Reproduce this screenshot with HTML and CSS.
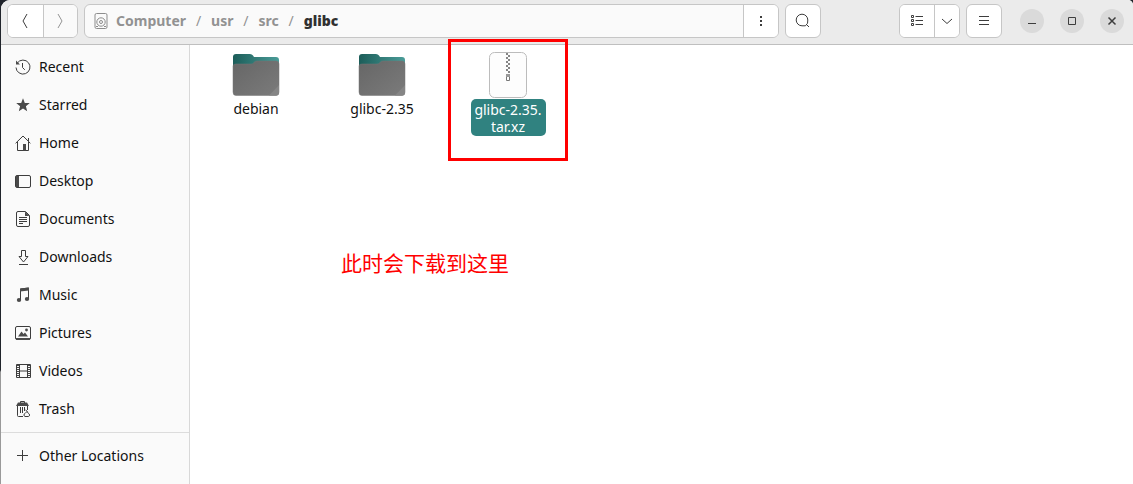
FILE: index.html
```html
<!DOCTYPE html>
<html lang="en">
<head>
<meta charset="utf-8">
<title>glibc</title>
<link rel="stylesheet" href="styles.css">
</head>
<body>
<div class="window">
  <header class="toolbar">
    <div class="group nav">
      <button class="cell" aria-label="Back"><svg width="16" height="16" viewBox="0 0 16 16"><path class="ln" d="M10 1 6 8l4 7"/></svg></button>
      <button class="cell off" aria-label="Forward"><svg width="16" height="16" viewBox="0 0 16 16"><path class="ln faint" d="M6 1l4 7-4 7"/></svg></button>
    </div>
    <div class="group path">
      <div class="crumbs">
        <svg width="14" height="16" viewBox="0 0 14 16"><g fill="none" stroke="#8d8d8d"><rect x="1" y=".5" width="12" height="15" rx="1.5"/><circle cx="7" cy="9" r="4.2"/><circle cx="7" cy="9" r="1.5"/><path d="M2 13.5h2M10 13.5h2"/></g></svg>
        <span class="c1">Computer</span><i>/</i><span class="c2">usr</span><i>/</i><span class="c3">src</span><i>/</i><b>glibc</b>
      </div>
      <button class="cell" aria-label="Path menu"><svg width="16" height="16" viewBox="0 0 16 16"><path fill="#3d3d3d" d="M7 3h2v2H7zM7 7h2v2H7zM7 11h2v2H7z"/></svg></button>
    </div>
    <button class="group single" aria-label="Search"><svg width="16" height="16" viewBox="0 0 16 16"><path class="ln" d="M12.8 7a5.8 5.8 0 1 0-5.8 5.8h3.4A5.8 5.8 0 0 0 12.8 7zM11 11l3 3"/></svg></button>
    <div class="group view">
      <button class="cell" aria-label="List view"><svg width="16" height="16" viewBox="0 0 16 16"><path class="ln" d="M2.5 2.5h2v2h-2zM2.5 6.500h2v2h-2zM2.500 10.500h2v2h-2zM6.500 3.500h7.500M6.500 7.500h7.500M6.500 11.500h7.500"/></svg></button>
      <button class="cell narrow" aria-label="View options"><svg width="16" height="16" viewBox="0 0 16 16"><path class="ln" d="M3 6l5 4.500L13 6"/></svg></button>
    </div>
    <button class="group single menu" aria-label="Menu"><svg width="16" height="16" viewBox="0 0 16 16"><path class="ln" d="M3 3.500h10M3 7.500h10M3 11.500h10"/></svg></button>
    <div class="controls">
      <button aria-label="Minimize"><svg width="16" height="16" viewBox="0 0 16 16"><path class="ln" d="M4 10.500h8"/></svg></button>
      <button aria-label="Maximize"><svg width="16" height="16" viewBox="0 0 16 16"><path class="ln" d="M4.500 4.500h7v7h-7z"/></svg></button>
      <button aria-label="Close"><svg width="16" height="16" viewBox="0 0 16 16"><path class="ln thick" d="M4.500 4.500l7 7M11.500 4.500l-7 7"/></svg></button>
    </div>
  </header>
  <div class="body">
    <nav class="sidebar">
      <a class="row"><svg width="16" height="16" viewBox="0 0 16 16"><path class="ln" d="M2.300 4A7 7 0 1 1 1 8.500M7.500 4v4.500l2.300 2.300"/><path class="fl" d="M1 1.500v4h4z"/></svg><span>Recent</span></a>
      <a class="row"><svg width="16" height="16" viewBox="0 0 16 16"><path class="fl" d="M8 1.200l1.800 4.700 5 .2-3.900 3.200 1.300 4.900L8 11.500l-4.200 2.700 1.300-4.900L1.200 6.100l5-.2z"/></svg><span>Starred</span></a>
      <a class="row"><svg width="16" height="16" viewBox="0 0 16 16"><path class="ln" d="M.6 8.300 8 1l7.400 7.300M2.500 7v8.500h11V7M13.500 3v3"/><path class="fl" d="M8 9h3v6.500H8z"/></svg><span>Home</span></a>
      <a class="row"><svg width="16" height="16" viewBox="0 0 16 16"><rect class="ln" x=".5" y="2.500" width="15" height="12" rx="1.500"/><path class="fl" d="M1 3h3v11H1z"/></svg><span>Desktop</span></a>
      <a class="row"><svg width="16" height="16" viewBox="0 0 16 16"><path class="ln" d="M3 .5h7.500l4 4V14a1.500 1.500 0 0 1-1.500 1.500H3A1.500 1.500 0 0 1 1.500 14V2A1.500 1.500 0 0 1 3 .5zM4 6.500h8M4 8.500h8M4 10.500h8M4 12.500h4"/><path class="fl" d="M10 .5v4.500h4.500z"/></svg><span>Documents</span></a>
      <a class="row"><svg width="16" height="16" viewBox="0 0 16 16"><path class="ln" d="M6.500 1.500h4v6H13l-4.500 5.500L4 7.500h2.500zM4 15.500h9"/></svg><span>Downloads</span></a>
      <a class="row"><svg width="16" height="16" viewBox="0 0 16 16"><path class="ln" d="M5.500 13V2l8-1v11"/><path class="fl" d="M5 1.500l9-1v3l-9 1z"/><ellipse class="fl" cx="4" cy="13" rx="2.200" ry="2"/><ellipse class="fl" cx="12" cy="12" rx="2.200" ry="2"/></svg><span>Music</span></a>
      <a class="row"><svg width="16" height="16" viewBox="0 0 16 16"><rect class="ln" x=".5" y="1.500" width="15" height="13" rx="1.500"/><path class="fl" d="M1 13h14v2H1zM3 11.500l3.500-5 2 2.500 1.500-1.500 3 4z"/><circle class="fl" cx="11.500" cy="5" r="1.400"/></svg><span>Pictures</span></a>
      <a class="row"><svg width="16" height="16" viewBox="0 0 16 16"><path class="ln" d="M1.500 1.500h14v13h-14zM4.500 2v12M12.500 2v12M5 8h7"/><path stroke="#4a4a4a" stroke-width="2" stroke-dasharray="1 1" d="M3 2v12M14 2v12"/></svg><span>Videos</span></a>
      <a class="row"><svg width="16" height="16" viewBox="0 0 16 16"><path class="ln" d="M5.500 2V.5h4V2M2.500 5v9.500a1 1 0 0 0 1 1H8M5.500 6v6M7.500 6v6M9.500 6v4M12.500 5v4M10.500 9l2 1.500M10 15.500a1.600 1.600 0 0 1 0-3l2-2 1.500 2a1.600 1.600 0 0 1 0 3z"/><path class="fl" d="M3 1.500h9l2 3.500H1z"/></svg><span>Trash</span></a>
      <a class="row other"><svg width="16" height="16" viewBox="0 0 16 16"><path class="ln" d="M2 7.500h11M7.500 2v11"/></svg><span>Other Locations</span></a>
    </nav>
    <main class="files">
      <figure class="file">
        <svg width="48" height="46" viewBox="0 0 48 46"><defs><linearGradient id="tab"><stop stop-color="#1c5d59"/><stop offset="1" stop-color="#4a9c98"/></linearGradient><linearGradient id="front" x2="1" y2="1"><stop stop-color="#666"/><stop offset="1" stop-color="#7b7b7b"/></linearGradient></defs><path fill="url(#tab)" d="M1 20V5q0-3 3-3h14q2 0 3 1.500L22 5h22q3 0 3 3v12z"/><path fill="url(#front)" stroke="#777" stroke-width=".5" d="M1 14q0-2 3-2h15q2 0 3-1.500T25 9h19q3 0 3 3v28q0 3.500-3 3.500H4q-3 0-3-3.500z"/><path fill="#858585" d="M47 33v7q0 3.500-3 3.500h-7z"/></svg>
        <figcaption>debian</figcaption>
      </figure>
      <figure class="file">
        <svg width="48" height="46" viewBox="0 0 48 46"><path fill="url(#tab)" d="M1 20V5q0-3 3-3h14q2 0 3 1.500L22 5h22q3 0 3 3v12z"/><path fill="url(#front)" stroke="#777" stroke-width=".5" d="M1 14q0-2 3-2h15q2 0 3-1.500T25 9h19q3 0 3 3v28q0 3.500-3 3.500H4q-3 0-3-3.500z"/><path fill="#858585" d="M47 33v7q0 3.500-3 3.500h-7z"/></svg>
        <figcaption class="lib">glibc-2.35</figcaption>
      </figure>
      <figure class="file">
        <svg width="48" height="46" viewBox="0 0 48 46"><rect x="5.500" y=".5" width="37" height="45" rx="5" fill="#fdfdfd" stroke="#bcbcbc"/><path stroke="#858585" stroke-width="2" stroke-dasharray="2 2" d="M23 1v20M25 3v18"/><path fill="#fff" stroke="#777" d="M22.500 22.500h3v6h-3z"/><path fill="#999" d="M22 22h4v3h-4z"/></svg>
        <figcaption class="selected">glibc-2.35.<br><span>tar.xz</span></figcaption>
      </figure>
    </main>
  </div>
  <div class="highlight"></div>
  <div class="note" lang="zh">此时会下载到这里</div>
</div>
</body>
</html>
```
FILE: styles.css
```css
* { box-sizing: border-box; }
body {
  margin: 0;
  width: 1133px;
  height: 484px;
  overflow: hidden;
  background: linear-gradient(#20242b 0 370px, #999 372px);
  font: 14px/20px "Noto Sans", "Open Sans", sans-serif;
  color: #111;
}
svg { display: block; flex: none; }
button { border: 0; padding: 0; font: inherit; }
.ln { fill: none; stroke: #3d3d3d; }
.faint { stroke: #949494; }
.thick { stroke-width: 1.5; }
.fl { fill: #4a4a4a; }
.window {
  position: relative;
  height: 484px;
  margin-left: 1px;
  overflow: hidden;
  border-radius: 9px 5px 0 0;
  background: #fff;
}
.toolbar {
  display: flex;
  align-items: flex-start;
  gap: 6px;
  height: 45px;
  padding: 4px 9px 0 6px;
  background: #ebebeb;
  border-bottom: 1px solid #bfbfbf;
}
.group {
  display: flex;
  height: 34px;
  background: #fff;
  border: 1px solid #c6c6c6;
  border-radius: 6px;
  overflow: hidden;
}
.cell {
  display: flex;
  align-items: center;
  justify-content: center;
  width: 35px;
  background: #fff;
}
.cell + .cell, .crumbs + .cell { border-left: 1px solid #c6c6c6; }
.nav { width: 71px; }
.nav .off { background: #fafafa; }
.path { width: 695px; background: #fafafa; }
.crumbs {
  display: flex;
  flex: 1;
  align-items: center;
  padding-left: 9px;
  font-weight: 700;
  color: #929292;
}
.crumbs svg { margin-right: 8px; }
.crumbs i { width: 25px; text-align: center; font-style: normal; font-weight: 400; }
.crumbs b { color: #303030; }
.single { width: 36px; align-items: center; justify-content: center; }
.view { width: 61px; margin-left: 72px; }
.narrow { width: 25px; }
.controls { display: flex; gap: 16px; margin: 5px 0 0 12px; }
.controls button {
  display: flex;
  align-items: center;
  justify-content: center;
  width: 24px;
  height: 24px;
  border-radius: 50%;
  background: #dadada;
}
.body { display: flex; height: 439px; }
.sidebar {
  width: 189px;
  padding-top: 3px;
  background: #fafafa;
  border-right: 1px solid #d8d8d8;
}
.row {
  display: flex;
  align-items: center;
  gap: 8px;
  height: 38px;
  padding-left: 14px;
}
.other { height: 47px; margin-top: 4px; border-top: 1px solid #dcdcdc; }
.files { display: flex; gap: 26px; padding: 7px 0 0 16px; }
.file {
  display: flex;
  flex-direction: column;
  align-items: center;
  width: 100px;
  margin: 0;
}
figcaption { margin-top: 1px; line-height: 20px; text-align: center; }
.selected {
  width: 75px;
  height: 37px;
  padding-top: 2px;
  border-radius: 5px;
  background: #308280;
  color: #fff;
  line-height: 17px;
}
.highlight {
  position: absolute;
  left: 447px;
  top: 39px;
  width: 120px;
  height: 122px;
  border: 3px solid #f00;
}
.note {
  position: absolute;
  left: 340px;
  top: 246px;
  font: 21px/32px "Noto Sans CJK SC", sans-serif;
  color: #f00;
  white-space: nowrap;
}
```
